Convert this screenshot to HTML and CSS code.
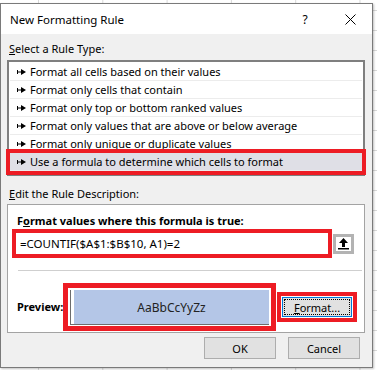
FILE: index.html
```html
<!DOCTYPE html>
<html>
<head>
  <link rel="stylesheet" href="styles.css">
</head>
<body>

<div class="dialog">
  <!-- title bar -->
  <div class="titlebar">
    <span class="title">New Formatting Rule</span>
    <span class="help">?</span>
    <span class="close">
      <svg width="11" height="11" viewBox="0 0 11 11"><path d="M0.5 0.5 L10.5 10.5 M10.5 0.5 L0.5 10.5" stroke="#000" stroke-width="1" fill="none"/></svg>
    </span>
  </div>

  <div class="content">
    <div class="label"><u>S</u>elect a Rule Type:</div>
    <ul class="rule-list">
      <li><svg class="arrow" width="9" height="6" viewBox="0 0 9 6"><path d="M0 1h1v1.5h3v-2.5l5 3l-5 3v-2.5h-3v1.5h-1z" fill="#000"/></svg>Format all cells based on their values</li>
      <li><svg class="arrow" width="9" height="6" viewBox="0 0 9 6"><path d="M0 1h1v1.5h3v-2.5l5 3l-5 3v-2.5h-3v1.5h-1z" fill="#000"/></svg>Format only cells that contain</li>
      <li><svg class="arrow" width="9" height="6" viewBox="0 0 9 6"><path d="M0 1h1v1.5h3v-2.5l5 3l-5 3v-2.5h-3v1.5h-1z" fill="#000"/></svg>Format only top or bottom ranked values</li>
      <li><svg class="arrow" width="9" height="6" viewBox="0 0 9 6"><path d="M0 1h1v1.5h3v-2.5l5 3l-5 3v-2.5h-3v1.5h-1z" fill="#000"/></svg>Format only values that are above or below average</li>
      <li><svg class="arrow" width="9" height="6" viewBox="0 0 9 6"><path d="M0 1h1v1.5h3v-2.5l5 3l-5 3v-2.5h-3v1.5h-1z" fill="#000"/></svg>Format only unique or duplicate values</li>
      <li class="selected"><svg class="arrow" width="9" height="6" viewBox="0 0 9 6"><path d="M0 1h1v1.5h3v-2.5l5 3l-5 3v-2.5h-3v1.5h-1z" fill="#000"/></svg>Use a formula to determine which cells to format</li>
    </ul>

    <div class="label label-edit"><u>E</u>dit the Rule Description:</div>
    <div class="group">
      <div class="bold-label">F<u>o</u>rmat values where this formula is true:</div>
      <div class="formula-row">
        <div class="formula-box">
          <div class="formula-input">=COUNTIF($A$1:$B$10, A1)=2</div>
        </div>
        <div class="ref-btn">
          <svg width="11" height="12" viewBox="0 0 11 12"><path d="M5.5 0 L10 5 H7 V9 H4 V5 H1 Z" fill="#000"/><rect x="0" y="10" width="11" height="1.5" fill="#000"/></svg>
        </div>
      </div>
      <div class="divider"></div>
      <div class="preview-row">
        <span class="bold-label preview-label">Preview:</span>
        <div class="preview-frame">
          <div class="preview-sunk">
            <div class="preview-sample">AaBbCcYyZz</div>
          </div>
        </div>
        <div class="format-frame">
          <div class="btn format-btn"><span class="focus"><u>F</u>ormat...</span></div>
        </div>
      </div>
    </div>

    <div class="buttons">
      <div class="btn">OK</div>
      <div class="btn">Cancel</div>
    </div>
  </div>
</div>

</body>
</html>
```

FILE: styles.css
```css
/* excel sheet behind the dialog */
body {
  margin: 0;
  width: 377px;
  height: 370px;
  overflow: hidden;
  background-color: #fff;
  background-image:
    linear-gradient(to right, #d9d9d9 1px, transparent 1px),
    linear-gradient(to bottom, #d9d9d9 1px, transparent 1px);
  background-size: 64.3px 20px;
  background-position: 38px 0, 0 10px;
  font-family: "Noto Sans", "Open Sans", sans-serif;
  font-size: 11px;
  color: #000;
}

.dialog {
  margin-top: 3px;
  width: 373px;
  height: 365px;
  box-sizing: border-box;
  border: 1px solid #7a7a7a;
  background: #f0f0f0;
  box-shadow: 1px 1px 2px rgba(0, 0, 0, 0.25);
}

.titlebar {
  height: 30px;
  background: #fff;
  display: flex;
  align-items: center;
}
.title {
  padding-left: 9px;
  font-size: 11.5px;
  flex: 1;
}
.help {
  width: 46px;
  text-align: center;
  font-size: 12px;
}
.close {
  width: 44px;
  display: flex;
  justify-content: center;
}

.content {
  padding: 0 7px 0 6px;
}

.label {
  margin-top: 7px;
  line-height: 16px;
  padding-left: 2px;
}
.label-edit {
  margin-top: 10px;
  margin-bottom: 2px;
}

/* rule type list */
.rule-list {
  list-style: none;
  margin: 3px 0 0 0;
  padding: 1px 0 3px 0;
  width: 358px;
  box-sizing: border-box;
  border: 2px solid #7f7f7f;
  background: #fff;
}
.rule-list li {
  height: 18px;
  box-sizing: border-box;
  line-height: 17px;
  margin-left: 1px;
  margin-right: 1px;
  padding-left: 7px;
  border-bottom: 1px solid #ececec;
  display: flex;
  align-items: center;
}
.rule-list li.selected {
  background: #dfdfe6;
  outline: 4px solid #ed1c24;
  outline-offset: 0;
}
.arrow {
  margin-right: 4px;
}

/* description group */
.group {
  width: 358px;
  box-sizing: border-box;
  border: 1px solid #a3a3a3;
  background: #fff;
  padding-bottom: 1px;
}
.bold-label {
  font-weight: bold;
  line-height: 16px;
}
.group > .bold-label {
  margin: 8px 0 0 9px;
}
.formula-row {
  display: flex;
  align-items: center;
  margin-left: 4px;
}
.formula-box {
  width: 320px;
  height: 29px;
  box-sizing: border-box;
  border: 4px solid #ed1c24;
  background: #fff;
}
.formula-input {
  line-height: 21px;
  padding-left: 4px;
  font-size: 11.5px;
}
.ref-btn {
  margin-left: 1px;
  width: 21px;
  height: 20px;
  box-sizing: border-box;
  border: 3px solid #b3b3b3;
  background: #fff;
  display: flex;
  align-items: center;
  justify-content: center;
}
.divider {
  height: 1px;
  background: #cfcfcf;
  margin: 12px 2px 0 10px;
}

.preview-row {
  display: flex;
  align-items: center;
  margin: 12px 0 0 9px;
}
.preview-label {
  width: 46px;
}
.preview-frame {
  width: 213px;
  height: 48px;
  box-sizing: border-box;
  border: 5px solid #ed1c24;
  background: #fff;
  padding: 2px 2px 1px 2px;
}
.preview-sunk {
  height: 100%;
  box-sizing: border-box;
  border-left: 1px solid #6d6d6d;
  border-bottom: 1px solid #6d6d6d;
  padding-left: 3px;
}
.preview-sample {
  height: 100%;
  background: #b4c6e7;
  display: flex;
  align-items: center;
  justify-content: center;
  font-size: 12px;
  color: #222;
}
.format-frame {
  margin-left: 1px;
  border: 4px solid #ed1c24;
  padding: 1px;
}

.btn {
  width: 72px;
  height: 22px;
  box-sizing: border-box;
  border: 1px solid #adadad;
  background: #e1e1e1;
  display: flex;
  align-items: center;
  justify-content: center;
}
.format-btn {
  width: 70px;
  height: 20px;
  border-color: #0078d7;
  padding: 1px;
}
.focus {
  flex: 1;
  align-self: stretch;
  border: 1px dotted #000;
  display: flex;
  align-items: center;
  justify-content: center;
}

.buttons {
  display: flex;
  justify-content: flex-end;
  gap: 12px;
  margin: 4px 5px 0 0;
}
```
